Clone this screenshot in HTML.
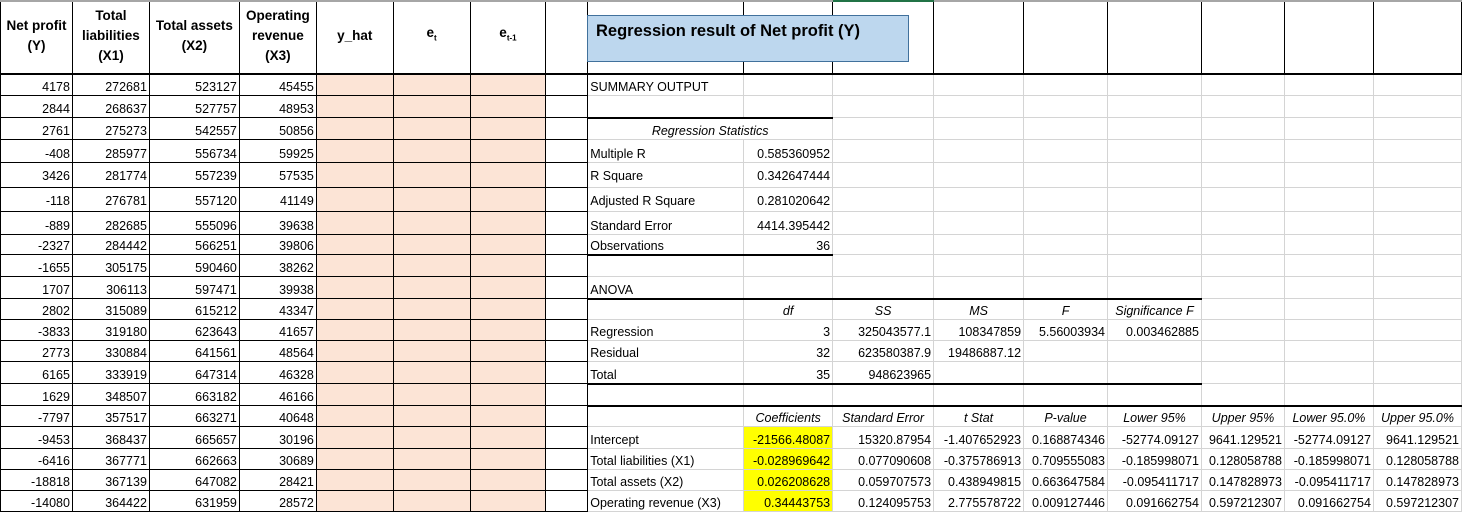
<!DOCTYPE html>
<html><head><meta charset="utf-8"><style>
body{margin:0;width:1462px;height:508px;overflow:hidden;background:#fff;font-family:"Liberation Sans",sans-serif;font-size:12.5px;color:#000;position:relative}
table{border-collapse:collapse;table-layout:fixed;position:absolute;left:0;top:0}
td{border:1px solid #d4d4d4;padding:0 2px 1px 2px;white-space:nowrap;overflow:hidden;vertical-align:bottom;text-align:left}
td:nth-child(-n+8){border:1px solid #000}
td:nth-child(9){border-left:1px solid #000}
tr.h td{border:1px solid #000;border-bottom:2px solid #000;font-weight:bold;text-align:center;vertical-align:middle;line-height:20px;font-size:13.5px}
.r{text-align:right}.c{text-align:center}.i{font-style:italic}
.p{background:#fce4d6}
.y{background:#ffff00}
.t{border-top:2px solid #000 !important}
.b{border-bottom:2px solid #000 !important}
sub{font-size:8px}
#title{position:absolute;left:587px;top:15px;width:312px;height:45px;background:#bdd7ee;border:1px solid #41719c;font-weight:bold;font-size:16.5px;padding:0 0 0 8px;line-height:30px;box-sizing:content-box}
#top{position:absolute;left:0;top:0;width:1462px;height:2px;background:#a6a6a6}
#g{position:absolute;left:833px;top:0;width:101px;height:2px;background:#217346}
</style></head><body>
<table>
<colgroup><col style="width:72px"><col style="width:77px"><col style="width:90px"><col style="width:77px"><col style="width:77px"><col style="width:77px"><col style="width:76px"><col style="width:42px"><col style="width:156px"><col style="width:89px"><col style="width:101px"><col style="width:90px"><col style="width:84px"><col style="width:94px"><col style="width:83px"><col style="width:89px"><col style="width:88px"></colgroup>
<tr class="h" style="height:73px"><td>Net profit<br>(Y)</td><td>Total<br>liabilities<br>(X1)</td><td>Total assets<br>(X2)</td><td>Operating<br>revenue<br>(X3)</td><td>y_hat</td><td>e<sub>t</sub></td><td>e<sub>t-1</sub></td><td></td><td></td><td></td><td></td><td></td><td></td><td></td><td></td><td></td><td></td></tr>
<tr style="height:22px"><td class="r">4178</td><td class="r">272681</td><td class="r">523127</td><td class="r">45455</td><td class="p"></td><td class="p"></td><td class="p"></td><td></td><td>SUMMARY OUTPUT</td><td></td><td></td><td></td><td></td><td></td><td></td><td></td><td></td></tr>
<tr style="height:22px"><td class="r">2844</td><td class="r">268637</td><td class="r">527757</td><td class="r">48953</td><td class="p"></td><td class="p"></td><td class="p"></td><td></td><td></td><td></td><td></td><td></td><td></td><td></td><td></td><td></td><td></td></tr>
<tr style="height:22px"><td class="r">2761</td><td class="r">275273</td><td class="r">542557</td><td class="r">50856</td><td class="p"></td><td class="p"></td><td class="p"></td><td></td><td colspan="2" class="c i t">Regression Statistics</td><td></td><td></td><td></td><td></td><td></td><td></td><td></td></tr>
<tr style="height:23px"><td class="r">-408</td><td class="r">285977</td><td class="r">556734</td><td class="r">59925</td><td class="p"></td><td class="p"></td><td class="p"></td><td></td><td>Multiple R</td><td class="r">0.585360952</td><td></td><td></td><td></td><td></td><td></td><td></td><td></td></tr>
<tr style="height:25px"><td class="r" style="padding-bottom:4px">3426</td><td class="r" style="padding-bottom:4px">281774</td><td class="r" style="padding-bottom:4px">557239</td><td class="r" style="padding-bottom:4px">57535</td><td class="p"></td><td class="p"></td><td class="p"></td><td></td><td style="padding-bottom:4px">R Square</td><td class="r" style="padding-bottom:4px">0.342647444</td><td></td><td></td><td></td><td></td><td></td><td></td><td></td></tr>
<tr style="height:24px"><td class="r" style="padding-bottom:3px">-118</td><td class="r" style="padding-bottom:3px">276781</td><td class="r" style="padding-bottom:3px">557120</td><td class="r" style="padding-bottom:3px">41149</td><td class="p"></td><td class="p"></td><td class="p"></td><td></td><td style="padding-bottom:3px">Adjusted R Square</td><td class="r" style="padding-bottom:3px">0.281020642</td><td></td><td></td><td></td><td></td><td></td><td></td><td></td></tr>
<tr style="height:23px"><td class="r">-889</td><td class="r">282685</td><td class="r">555096</td><td class="r">39638</td><td class="p"></td><td class="p"></td><td class="p"></td><td></td><td>Standard Error</td><td class="r">4414.395442</td><td></td><td></td><td></td><td></td><td></td><td></td><td></td></tr>
<tr style="height:20px"><td class="r">-2327</td><td class="r">284442</td><td class="r">566251</td><td class="r">39806</td><td class="p"></td><td class="p"></td><td class="p"></td><td></td><td class="b">Observations</td><td class="r b">36</td><td></td><td></td><td></td><td></td><td></td><td></td><td></td></tr>
<tr style="height:22px"><td class="r">-1655</td><td class="r">305175</td><td class="r">590460</td><td class="r">38262</td><td class="p"></td><td class="p"></td><td class="p"></td><td></td><td></td><td></td><td></td><td></td><td></td><td></td><td></td><td></td><td></td></tr>
<tr style="height:22px"><td class="r">1707</td><td class="r">306113</td><td class="r">597471</td><td class="r">39938</td><td class="p"></td><td class="p"></td><td class="p"></td><td></td><td>ANOVA</td><td></td><td></td><td></td><td></td><td></td><td></td><td></td><td></td></tr>
<tr style="height:21px"><td class="r">2802</td><td class="r">315089</td><td class="r">615212</td><td class="r">43347</td><td class="p"></td><td class="p"></td><td class="p"></td><td></td><td class="t"></td><td class="c i t">df</td><td class="c i t">SS</td><td class="c i t">MS</td><td class="c i t">F</td><td class="c i t">Significance F</td><td></td><td></td><td></td></tr>
<tr style="height:21px"><td class="r">-3833</td><td class="r">319180</td><td class="r">623643</td><td class="r">41657</td><td class="p"></td><td class="p"></td><td class="p"></td><td></td><td>Regression</td><td class="r">3</td><td class="r">325043577.1</td><td class="r">108347859</td><td class="r">5.56003934</td><td class="r">0.003462885</td><td></td><td></td><td></td></tr>
<tr style="height:21px"><td class="r">2773</td><td class="r">330884</td><td class="r">641561</td><td class="r">48564</td><td class="p"></td><td class="p"></td><td class="p"></td><td></td><td>Residual</td><td class="r">32</td><td class="r">623580387.9</td><td class="r">19486887.12</td><td></td><td></td><td></td><td></td><td></td></tr>
<tr style="height:22px"><td class="r">6165</td><td class="r">333919</td><td class="r">647314</td><td class="r">46328</td><td class="p"></td><td class="p"></td><td class="p"></td><td></td><td class="b">Total</td><td class="r b">35</td><td class="r b">948623965</td><td class="b"></td><td class="b"></td><td class="b"></td><td></td><td></td><td></td></tr>
<tr style="height:22px"><td class="r">1629</td><td class="r">348507</td><td class="r">663182</td><td class="r">46166</td><td class="p"></td><td class="p"></td><td class="p"></td><td></td><td></td><td></td><td></td><td></td><td></td><td></td><td></td><td></td><td></td></tr>
<tr style="height:21px"><td class="r">-7797</td><td class="r">357517</td><td class="r">663271</td><td class="r">40648</td><td class="p"></td><td class="p"></td><td class="p"></td><td></td><td class="t"></td><td class="c i t">Coefficients</td><td class="c i t">Standard Error</td><td class="c i t">t Stat</td><td class="c i t">P-value</td><td class="c i t">Lower 95%</td><td class="c i t">Upper 95%</td><td class="c i t">Lower 95.0%</td><td class="c i t">Upper 95.0%</td></tr>
<tr style="height:22px"><td class="r">-9453</td><td class="r">368437</td><td class="r">665657</td><td class="r">30196</td><td class="p"></td><td class="p"></td><td class="p"></td><td></td><td>Intercept</td><td class="r y">-21566.48087</td><td class="r">15320.87954</td><td class="r">-1.407652923</td><td class="r">0.168874346</td><td class="r">-52774.09127</td><td class="r">9641.129521</td><td class="r">-52774.09127</td><td class="r">9641.129521</td></tr>
<tr style="height:21px"><td class="r">-6416</td><td class="r">367771</td><td class="r">662663</td><td class="r">30689</td><td class="p"></td><td class="p"></td><td class="p"></td><td></td><td>Total liabilities (X1)</td><td class="r y">-0.028969642</td><td class="r">0.077090608</td><td class="r">-0.375786913</td><td class="r">0.709555083</td><td class="r">-0.185998071</td><td class="r">0.128058788</td><td class="r">-0.185998071</td><td class="r">0.128058788</td></tr>
<tr style="height:21px"><td class="r">-18818</td><td class="r">367139</td><td class="r">647082</td><td class="r">28421</td><td class="p"></td><td class="p"></td><td class="p"></td><td></td><td>Total assets (X2)</td><td class="r y">0.026208628</td><td class="r">0.059707573</td><td class="r">0.438949815</td><td class="r">0.663647584</td><td class="r">-0.095411717</td><td class="r">0.147828973</td><td class="r">-0.095411717</td><td class="r">0.147828973</td></tr>
<tr style="height:21px"><td class="r">-14080</td><td class="r">364422</td><td class="r">631959</td><td class="r">28572</td><td class="p"></td><td class="p"></td><td class="p"></td><td></td><td>Operating revenue (X3)</td><td class="r y">0.34443753</td><td class="r">0.124095753</td><td class="r">2.775578722</td><td class="r">0.009127446</td><td class="r">0.091662754</td><td class="r">0.597212307</td><td class="r">0.091662754</td><td class="r">0.597212307</td></tr>
</table>
<div id="top"></div><div id="g"></div>
<div id="title">Regression result of Net profit (Y)</div>
</body></html>
